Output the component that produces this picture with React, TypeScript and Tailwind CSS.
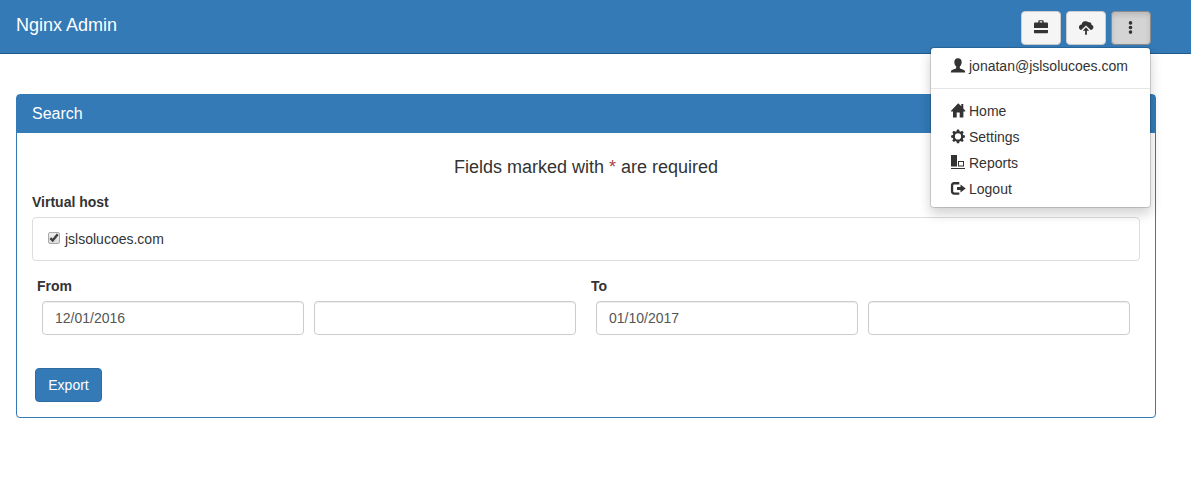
import { useState } from 'react';
import type { ReactNode } from 'react';

function Glyph({ children }: { children: ReactNode }) {
  return (
    <svg viewBox="0 0 14 14" className="size-3.5 shrink-0 overflow-visible" fill="currentColor" aria-hidden="true">
      {children}
    </svg>
  );
}

const UserIcon = () => (
  <Glyph>
    <path d="M7-.7C4.700-.7 3.300.8 3.300 3c0 2 .9 3.700 1.900 4.600v1.300C5.200 9.900.4 10.500.1 12L-.2 13.500h14.400L13.900 12C13.600 10.500 8.800 9.900 8.800 8.900V7.600c1-.9 1.900-2.600 1.900-4.600C10.700.8 9.300-.7 7-.7z" />
  </Glyph>
);

const HomeIcon = () => (
  <Glyph>
    <path d="M7.200-.8L.1 6.700c-.3.400-.1.700.3.700H2v5.800c0 .3.200.4.400.4h3.300V8.600h3v5H12c.3 0 .4-.1.400-.4V7.400H14c.5 0 .6-.3.300-.7L12.300 4.400V.1h-2v2.200z" />
  </Glyph>
);

const CogIcon = () => (
  <Glyph>
    <path
      fillRule="evenodd"
      d="M5.900-.5h2.200l.4 1.800 1.100.5 1.600-1L12.700 2.300l-1 1.600.5 1.100 1.700.4v2.100l-1.700.4-.5 1.100 1 1.600-1.500 1.500-1.600-1-1.100.5-.4 1.700H5.900l-.4-1.700-1.100-.5-1.600 1-1.500-1.500 1-1.600-.5-1.100-1.700-.4V5.400l1.700-.4.5-1.100-1-1.600 1.500-1.500 1.600 1 1.100-.5zM7 3.300a3.100 3.100 0 1 0 0 6.200 3.100 3.100 0 0 0 0-6.200z"
    />
  </Glyph>
);

const ReportsIcon = () => (
  <Glyph>
    <path fillRule="evenodd" d="M0-1H6v11.500H0zM7 5h6v5.500H7zm1 1v3.500h4V6zM0 12h14v1H0z" />
  </Glyph>
);

const LogoutIcon = () => (
  <Glyph>
    <path d="M8.300.1H3.200C1.200.1-.1 1.400-.1 3.300v6.200c0 1.900 1.300 3.200 3.300 3.200h5.100v-2.300H3.400c-.8 0-1.200-.4-1.200-1.100V3.500c0-.7.4-1.100 1.200-1.100h4.900z" />
    <path d="M9.500 2.500V5H6v3h3.500v2.500L14.700 6.500z" />
  </Glyph>
);

const BriefcaseIcon = () => (
  <Glyph>
    <path
      fillRule="evenodd"
      d="M5.500-.7h3c.7 0 1.200.5 1.200 1.200v1h3.100c.7 0 1.200.5 1.200 1.200V7H0V2.700c0-.7.5-1.200 1.200-1.200h3.100v-1C4.300-.2 4.800-.7 5.500-.7zm.2 1v1.200h2.600V.3zM0 9h14v2.200c0 .6-.4 1-1 1H1c-.6 0-1-.4-1-1z"
    />
  </Glyph>
);

const CloudUploadIcon = () => (
  <Glyph>
    <path d="M5.800.2C4 .2 2.800 1.500 2.700 3.400.9 3.600-.1 4.700-.1 6.200c0 1.500 1 2.600 2.300 2.700L7 4.600l4.800 4.300c1.500-.1 2.600-1.200 2.600-2.700 0-1.300-.8-2.200-2-2.500.2-1.600-1-2.800-2.500-2.400C8.900.6 7.400.2 5.800.2z" />
    <path d="M7 6.300L3.800 9.700h2.300v4h1.800v-4h2.300z" />
  </Glyph>
);

const MoreIcon = () => (
  <Glyph>
    <circle cx="6.500" cy="1.900" r="1.800" />
    <circle cx="6.500" cy="6.500" r="1.800" />
    <circle cx="6.500" cy="11.100" r="1.800" />
  </Glyph>
);

const toolButton =
  'flex h-[34px] w-10 items-center justify-center rounded border border-[#ccc] bg-[#f5f5f5] text-[#333]';
const toolButtonActive =
  'flex h-[34px] w-10 items-center justify-center rounded border border-[#8c8c8c] bg-[#d4d4d4] text-[#333] shadow-[inset_0_3px_5px_rgba(0,0,0,0.125)]';
const menuItem = 'flex items-center gap-1 px-5 py-[3px] hover:bg-[#f5f5f5]';
const field =
  'h-[34px] w-full min-w-0 rounded border border-[#ccc] bg-white px-3 text-[#555] shadow-[inset_0_1px_1px_rgba(0,0,0,0.075)] outline-none focus:border-[#66afe9]';

function Navbar() {
  const [open, setOpen] = useState(true);
  return (
    <header className="flex h-[54px] items-start justify-between border-b border-[#1f5b8c] bg-[#337ab7] pr-10 pl-4">
      <a href="#" className="py-[15px] text-lg leading-5 text-white">
        Nginx Admin
      </a>
      <nav className="relative flex gap-[5px] pt-[11px]">
        <button type="button" aria-label="Manage" className={toolButton}>
          <BriefcaseIcon />
        </button>
        <button type="button" aria-label="Upload" className={toolButton}>
          <CloudUploadIcon />
        </button>
        <button
          type="button"
          aria-label="More"
          aria-expanded={open}
          onClick={() => setOpen(!open)}
          className={open ? toolButtonActive : toolButton}
        >
          <MoreIcon />
        </button>
        {open && (
          <ul className="absolute top-full right-0 z-10 mt-0.5 min-w-[221px] rounded border border-black/15 bg-white bg-clip-padding py-[5px] whitespace-nowrap shadow-[0_6px_12px_rgba(0,0,0,0.175)]">
            <li>
              <a href="#" className={menuItem}><UserIcon />jonatan@jslsolucoes.com</a>
            </li>
            <li role="separator" className="my-[9px] h-px bg-[#e5e5e5]" />
            <li>
              <a href="#" className={menuItem}><HomeIcon />Home</a>
            </li>
            <li>
              <a href="#" className={menuItem}><CogIcon />Settings</a>
            </li>
            <li>
              <a href="#" className={menuItem}><ReportsIcon />Reports</a>
            </li>
            <li>
              <a href="#" className={menuItem}><LogoutIcon />Logout</a>
            </li>
          </ul>
        )}
      </nav>
    </header>
  );
}

function DateRangeField({ id, label, value }: { id: string; label: string; value: string }) {
  return (
    <div className="px-[5px]">
      <label htmlFor={id} className="mb-[5px] block font-bold">
        {label}
      </label>
      <div className="grid grid-cols-2 gap-2.5 px-[5px]">
        <input id={id} type="text" defaultValue={value} className={field} />
        <input type="text" aria-label={`${label} time`} className={field} />
      </div>
    </div>
  );
}

export default function App() {
  return (
    <div className="font-['Liberation_Sans',Arial,sans-serif] text-sm leading-5 text-[#333]">
      <Navbar />
      <main className="mt-10 mr-[35px] ml-4 rounded border border-[#337ab7] bg-white shadow-[0_1px_1px_rgba(0,0,0,0.05)]">
        <h3 className="bg-[#337ab7] px-[15px] py-[9px] text-base leading-5 text-white">Search</h3>
        <form className="px-[15px] pt-6 pb-[15px]" onSubmit={(e) => e.preventDefault()}>
          <p className="mb-[15px] text-center text-lg leading-5">
            Fields marked with <span className="text-[#a94442]">*</span> are required
          </p>
          <fieldset>
            <legend className="mb-[5px] font-bold">Virtual host</legend>
            <div className="mb-[15px] rounded border border-[#ddd] px-[15px] py-[11px]">
              <label className="flex items-start gap-[5px]">
                <span className="mt-[3px] grid size-3 place-items-center">
                  <input
                    type="checkbox"
                    defaultChecked
                    className="peer col-start-1 row-start-1 size-3 appearance-none rounded-xs border border-[#aaa] bg-linear-to-b from-[#eee] to-[#ddd]"
                  />
                  <svg
                    viewBox="0 0 12 12"
                    className="pointer-events-none invisible col-start-1 row-start-1 size-3 peer-checked:visible"
                    fill="none"
                    stroke="#404040"
                    strokeWidth="2.4"
                    aria-hidden="true"
                  >
                    <path d="M2.300 6.200l2.400 2.300L9.700 2.300" />
                  </svg>
                </span>
                <span>jslsolucoes.com</span>
              </label>
            </div>
          </fieldset>
          <div className="mb-[33px] grid grid-cols-2">
            <DateRangeField id="from" label="From" value="12/01/2016" />
            <DateRangeField id="to" label="To" value="01/10/2017" />
          </div>
          <button
            type="submit"
            className="ml-[3px] h-[34px] min-w-[67px] rounded border border-[#2e6da4] bg-[#337ab7] px-3 text-white hover:bg-[#286090]"
          >
            Export
          </button>
        </form>
      </main>
    </div>
  );
}
